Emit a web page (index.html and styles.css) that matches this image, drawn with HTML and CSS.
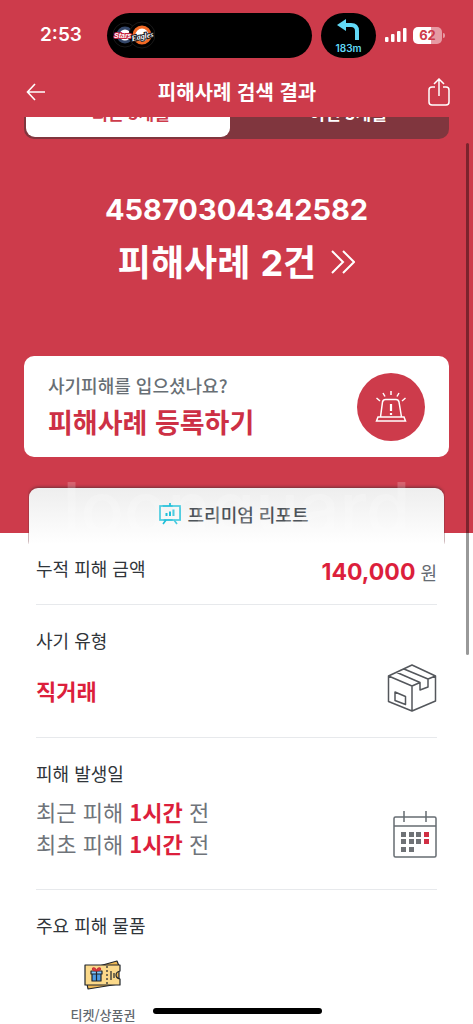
FILE: index.html
```html
<!DOCTYPE html>
<html lang="ko">
<head>
<meta charset="utf-8">
<meta name="viewport" content="width=device-width, initial-scale=1">
<title>피해사례 검색 결과</title>
<link rel="stylesheet" href="styles.css">
</head>
<body>
<div class="app">
  <div class="status">
    <time class="clock">2:53</time>
    <div class="island">
      <svg width="42" height="28" viewBox="0 0 42 28" aria-hidden="true">
        <circle cx="12" cy="14" r="12" fill="none" stroke="#191919"/>
        <circle cx="12" cy="14" r="7" fill="#fff" stroke="#34476a" stroke-width="3"/>
        <circle cx="29" cy="14" r="13" fill="#000" stroke="#191919"/>
        <circle cx="29" cy="14" r="8" fill="#fff" stroke="#f26a25" stroke-width="3"/>
        <text class="team team-stars" x="1" y="17">Stars</text>
        <text class="team team-eagles" x="18" y="18" transform="rotate(-12 29 14)">Eagles</text>
      </svg>
    </div>
    <div class="navigation">
      <svg width="24" height="22" viewBox="0 0 24 22" aria-hidden="true">
        <path d="M8 6h6q6 0 6 6v9" fill="none" stroke="#62d9f6" stroke-width="4"/>
        <path d="M0 6L9 0v12z" fill="#62d9f6"/>
      </svg>
      <span>183m</span>
    </div>
    <svg class="signal" width="22" height="14" viewBox="0 0 22 14" fill="#fff" aria-hidden="true">
      <rect y="9" width="3.5" height="5" rx="1"/><rect x="6" y="6" width="3.5" height="8" rx="1"/><rect x="12" y="3" width="3.5" height="11" rx="1"/><rect x="18" width="3.5" height="14" rx="1"/>
    </svg>
    <div class="battery">62</div>
  </div>
  <header class="header">
    <button class="icon-button" aria-label="뒤로">
      <svg width="20" height="18" viewBox="0 0 20 18" fill="none" stroke="#fff" stroke-width="1.6"><path d="M19 9H1.500M9 1L1.500 9L9 17"/></svg>
    </button>
    <h1>피해사례 검색 결과</h1>
    <button class="icon-button" aria-label="공유">
      <svg width="22" height="28" viewBox="0 0 22 28" fill="none" stroke="#fff" stroke-width="1.500"><path d="M7 9H4Q1 9 1 12V24Q1 27 4 27H18Q21 27 21 24V12Q21 9 18 9H15M11 18V1.500M6 6L11 1L16 6"/></svg>
    </button>
  </header>
  <main>
    <section class="hero">
      <div class="tabs-window">
        <div class="tabs">
          <button class="tab tab-active">최근 3개월</button>
          <button class="tab">이전 3개월</button>
        </div>
      </div>
      <div class="summary">
        <p class="account">45870304342582</p>
        <a class="count" href="#report">
          <span>피해사례 <b>2</b>건</span>
          <svg width="24" height="24" viewBox="0 0 24 24" fill="none" stroke="#fff" stroke-width="2"><path d="M1 1L12 12L1 23M12 1L23 12L12 23"/></svg>
        </a>
      </div>
      <a class="register" href="#register">
        <span class="register-text"><span class="question">사기피해를 입으셨나요?</span><strong>피해사례 등록하기</strong></span>
        <span class="siren">
          <svg width="32" height="32" viewBox="0 0 32 32" fill="none" stroke="#fff" stroke-width="1.500">
            <path d="M5.500 26L7.500 11Q8 8.500 10.500 8.500H21Q23.500 8.500 24 11L26.500 26M3 26H29L30.500 30H1.500Z"/>
            <path d="M16 0V4M8 2L10 5.500M24 2L22 5.500M1.500 7L5 10M30.500 7L27 10"/>
            <path d="M16 13V20M16 22V24" stroke-width="2.200"/>
          </svg>
        </span>
      </a>
    </section>
    <section class="report" id="report">
      <h2 class="report-title">
        <span class="watermark" aria-hidden="true">loonguard</span>
        <svg width="22" height="22" viewBox="0 0 22 22" fill="none" stroke="#1ebfd9" stroke-width="1.700"><rect x="1" y="3" width="20" height="14"/><path d="M11 0V3M7 17L4 21M15 17L18 21"/><path d="M7.500 13V10M11 13V8.500M14.500 13V6.500" stroke-width="2"/></svg>
        <span>프리미엄 리포트</span>
      </h2>
      <div class="row amount-row">
        <h3>누적 피해 금액</h3>
        <p class="amount"><strong>140,000</strong> 원</p>
      </div>
      <div class="row type-row">
        <div><h3>사기 유형</h3><p class="type">직거래</p></div>
        <svg class="row-icon" width="50" height="48" viewBox="0 0 50 48" fill="none" stroke="#54575c" stroke-width="1.500" stroke-linejoin="round" aria-hidden="true">
          <path d="M1.500 12L25 1L48.500 12V37L25 47L1.500 37.500ZM1.500 12L25 22L33 18.500M41 15L48.500 12M25 22V47M10 8.500L33 18.500V26L41 23V15L17 5M8 28V36.500L18.500 40.500V32.500Z"/>
        </svg>
      </div>
      <div class="row date-row">
        <div><h3>피해 발생일</h3><p class="dates">최근 피해 <strong>1시간</strong> 전<br>최초 피해 <strong>1시간</strong> 전</p></div>
        <svg class="row-icon" width="44" height="48" viewBox="0 0 44 48" fill="none" stroke="#666c72" stroke-width="1.500" aria-hidden="true">
          <rect x="1" y="7" width="42" height="40" rx="1.500"/><path d="M1 16H43M11 1V12M33 1V12"/>
          <g fill="#6f7276" stroke="none"><path d="M8 22h5v5H8zM16 22h5v5h-5zM23 22h5v5h-5zM8 29h5v5H8zM16 29h5v5h-5zM23 29h5v5h-5zM8 37h5v5H8zM16 37h5v5h-5z"/><path fill="#d12f43" d="M31 22h5v5h-5zM31 29h5v5h-5z"/></g>
        </svg>
      </div>
      <div class="row items-row">
        <h3>주요 피해 물품</h3>
        <figure class="item">
          <svg width="38" height="30" viewBox="0 0 38 30" fill="#fbd98a" stroke="#20252b" stroke-width="1.200" stroke-linejoin="round" aria-hidden="true">
            <path d="M15 6L33 1L35 6V24L4 29L3 24Z" fill="#efb954"/>
            <path d="M1 5H36V11Q32 12 32 15Q32 18 36 19V25H1Z"/>
            <path d="M23 6V25" stroke-dasharray="2 2"/><path d="M27 11V20M30 13V18"/>
            <path d="M8 13H17V21H8Z" fill="#4e9ce5"/><path d="M7 11H18V14H7Z" fill="#83c8ff"/><path d="M12.500 11V21"/>
            <path d="M12.500 11Q7 10 9 8Q11 7 12.500 11Q14 7 16 8Q18 10 12.500 11" fill="#e84747" stroke="#c92f35"/>
          </svg>
          <figcaption>티켓/상품권</figcaption>
        </figure>
      </div>
    </section>
  </main>
  <div class="scrollbar"></div>
  <div class="home-indicator"></div>
</div>
</body>
</html>
```
FILE: styles.css
```css
* { box-sizing: border-box; }
body, h1, h2, h3, p, figure { margin: 0; }
body {
  background: #fff;
  color: #30353a;
  font-family: "Noto Sans CJK KR", sans-serif;
}
button { padding: 0; border: 0; background: none; font: inherit; color: inherit; }
a { color: inherit; text-decoration: none; }
svg { display: block; flex: none; }
.app { position: relative; height: 100vh; overflow: hidden; }

.status {
  display: flex;
  align-items: center;
  height: 70px;
  padding: 0 31px 0 40px;
  background: #cd3b4b;
  color: #fff;
}
.clock { width: 67px; font: 600 19px/24px Inter, sans-serif; }
.island {
  display: flex;
  align-items: center;
  flex: 1;
  height: 45px;
  padding-left: 6px;
  border-radius: 23px;
  background: #000;
}
.team { font: italic 700 7px "Liberation Sans", sans-serif; fill: #fff; paint-order: stroke; stroke-width: 2px; }
.team-stars { stroke: #c7213e; }
.team-eagles { font: italic 700 8px "Liberation Serif", serif; fill: #fff; stroke: #13151b; }
.navigation {
  display: flex;
  flex-direction: column;
  align-items: center;
  width: 55px;
  height: 45px;
  margin: 0 9px;
  padding-top: 6px;
  border-radius: 23px;
  background: #000;
  color: #62d9f6;
  font: 600 10px/14px Inter, sans-serif;
}
.battery {
  position: relative;
  width: 29px;
  height: 17px;
  margin-left: 6px;
  border-radius: 5px;
  background: linear-gradient(90deg, #fff 62%, #e69aa3 62%);
  color: #cd3b4b;
  font: 700 13px/17px Inter, sans-serif;
  text-align: center;
}
.battery::after {
  content: "";
  position: absolute;
  top: 6px;
  right: -3px;
  width: 2px;
  height: 5px;
  border-radius: 0 2px 2px 0;
  background: #e69aa3;
}

.header {
  display: flex;
  align-items: center;
  justify-content: space-between;
  height: 47px;
  padding: 0 23px 4px 26px;
  background: #cd3b4b;
  color: #fff;
}
.header h1 { font-size: 20px; line-height: 30px; font-weight: 700; }

.hero { padding: 0 24px 76px; background: #cd3b4b; color: #fff; }
.tabs-window { display: flex; align-items: flex-end; height: 22px; overflow: hidden; }
.tabs {
  display: flex;
  flex: 1;
  gap: 13px;
  padding: 2px;
  border-radius: 10px;
  background: #80363e;
}
.tab { flex: 1; height: 44px; padding: 0 0 6px 6px; border-radius: 9px; font-size: 17px; font-weight: 700; }
.tab-active { background: #fff; color: #cd3b4b; }
.summary { display: flex; flex-direction: column; align-items: center; padding: 53px 0 67px; }
.account { font: 700 29px/36px Inter, sans-serif; }
.count { display: flex; align-items: center; gap: 15px; margin-top: 6px; font-size: 36px; line-height: 52px; font-weight: 700; }
.count b { font-family: Inter, sans-serif; font-weight: 700; }
.register {
  display: flex;
  align-items: center;
  justify-content: space-between;
  height: 101px;
  padding: 0 24px;
  border-radius: 10px;
  background: #fff;
  color: #cd3045;
}
.register-text { display: flex; flex-direction: column; gap: 4px; }
.question { color: #686f75; font-size: 18px; line-height: 26px; font-weight: 500; }
.register strong { font-size: 27px; line-height: 40px; }
.siren { display: grid; place-items: center; width: 68px; height: 68px; border-radius: 50%; background: #cd3b4b; }

.report { margin-top: -45px; padding: 0 29px; }
.report-title {
  position: relative;
  display: flex;
  align-items: center;
  justify-content: center;
  gap: 7px;
  height: 56px;
  padding: 0 6px 5px 0;
  border-radius: 9px 9px 0 0;
  background: linear-gradient(#eee, #fff);
  box-shadow: 0 -1px 3px #71313a;
  clip-path: inset(-6px -1px 0);
  font-size: 18px;
  line-height: 26px;
  font-weight: 500;
  color: #4d5359;
}
.watermark {
  position: absolute;
  top: -16px;
  right: 0;
  left: 0;
  color: #fff;
  font: 500 72px/72px Inter, sans-serif;
  text-align: center;
  opacity: 0.2;
}
.row { display: flex; justify-content: space-between; margin: 0 7px; border-bottom: 1px solid #e7e9ec; }
.row h3 { font-size: 18px; line-height: 26px; font-weight: 400; }
.amount-row { height: 61px; padding-top: 11px; }
.amount { padding-top: 1px; color: #656b72; font-size: 18px; line-height: 32px; }
.amount strong { color: #dc1f3c; font: 700 23px/32px Inter, sans-serif; }
.type-row { height: 133px; padding-top: 22px; }
.type { margin-top: 20px; color: #dc1f3c; font-size: 22px; line-height: 34px; font-weight: 700; }
.type-row .row-icon { margin-top: 37px; }
.date-row { height: 152px; padding-top: 22px; }
.dates { margin-top: 9px; color: #6f747a; font-size: 22px; line-height: 32px; font-weight: 400; }
.dates strong { color: #dc1f3c; }
.date-row .row-icon { margin-top: 50px; }
.items-row { flex-direction: column; align-items: flex-start; padding-top: 22px; border: 0; }
.item { display: flex; flex-direction: column; align-items: center; gap: 15px; width: 134px; margin-top: 22px; color: #62686e; font-size: 13px; line-height: 20px; font-weight: 500; }

.scrollbar { position: absolute; top: 143px; right: 4px; width: 3px; height: 50%; border-radius: 2px; background: rgba(0, 0, 0, 0.4); }
.home-indicator { position: absolute; bottom: 10px; left: 50%; width: 169px; height: 6px; margin-left: -84px; border-radius: 3px; background: #000; }
```
